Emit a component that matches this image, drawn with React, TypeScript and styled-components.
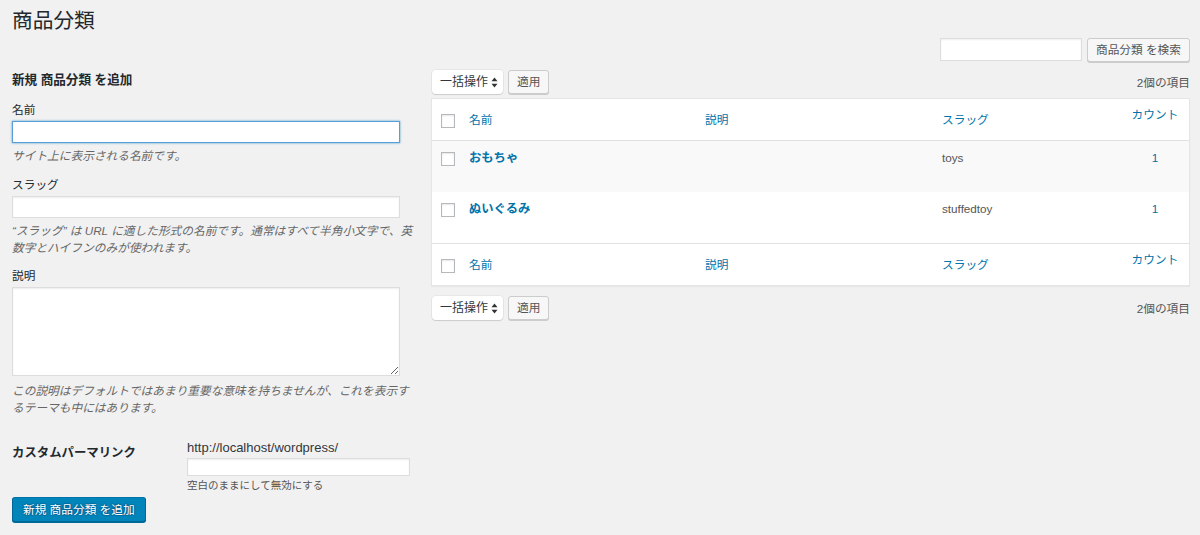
import React from "react";
import styled, { createGlobalStyle } from "styled-components";

type RowKind = "head" | "body" | "foot";
type Term = { id: number; name: string; slug: string; count: number };

const terms: Term[] = [
  { id: 1, name: "おもちゃ", slug: "toys", count: 1 },
  { id: 2, name: "ぬいぐるみ", slug: "stuffedtoy", count: 1 },
];

const GlobalStyle = createGlobalStyle`
  html, body {
    margin: 0;
    padding: 0;
    background: #f1f1f1;
  }
  body {
    font-family: "Liberation Sans", "Noto Sans CJK JP", sans-serif;
    font-size: 11.7px;
    line-height: 17px;
    color: #444;
  }
  * {
    box-sizing: border-box;
  }
`;

const Page = styled.div`
  width: 1200px;
  height: 535px;
  padding: 0 10px 0 12px;
  overflow: hidden;
`;

const Title = styled.h1`
  margin: 0;
  padding-top: 6px;
  font-size: 20.7px;
  line-height: 29px;
  font-weight: 400;
  color: #23282d;
`;

const SearchBox = styled.div`
  display: flex;
  justify-content: flex-end;
  align-items: flex-start;
  gap: 5px;
  margin-top: 3px;
  height: 24px;
`;

const Columns = styled.div`
  display: flex;
  gap: 13px;
`;

const LeftCol = styled.div`
  width: 406px;
  flex: none;
`;

const RightCol = styled.div`
  flex: 1;
`;

const SectionTitle = styled.h2`
  margin: 8px 0 0;
  font-size: 12.6px;
  line-height: 20px;
  font-weight: 700;
  color: #23282d;
`;

const Field = styled.div<{ $gap: number }>`
  margin-top: ${(p) => p.$gap}px;
`;

const FieldLabel = styled.label`
  display: block;
  margin-bottom: 3px;
  color: #23282d;
`;

const TextInput = styled.input<{ $width: number; $height: number; $focused?: boolean }>`
  display: block;
  width: ${(p) => p.$width}px;
  height: ${(p) => p.$height}px;
  margin: 0;
  padding: 2px 6px;
  background: #fff;
  border: 1px solid ${(p) => (p.$focused ? "#5b9dd9" : "#ddd")};
  box-shadow: ${(p) =>
    p.$focused ? "0 0 2px rgba(30, 140, 190, 0.8)" : "inset 0 1px 2px rgba(0, 0, 0, 0.07)"};
  font: inherit;
  color: #32373c;
  outline: none;
`;

const TextArea = styled.textarea`
  display: block;
  width: 388px;
  height: 89px;
  margin: 0 0 6px;
  padding: 2px 6px;
  background: #fff;
  border: 1px solid #ddd;
  box-shadow: inset 0 1px 2px rgba(0, 0, 0, 0.07);
  font: inherit;
  resize: vertical;
  outline: none;
`;

const Description = styled.p`
  margin: 4px 0 0;
  font-style: italic;
  color: #666;
`;

const PermalinkRow = styled.div`
  display: flex;
  margin-top: 23px;
`;

const PermalinkLabel = styled.div`
  width: 175px;
  flex: none;
  padding-top: 6px;
  font-size: 12.4px;
  font-weight: 700;
  color: #23282d;
`;

const PermalinkBody = styled.div`
  display: flex;
  flex-direction: column;
  gap: 2px;
`;

const BaseUrl = styled.span`
  font-size: 13px;
  color: #32373c;
`;

const Hint = styled.span`
  margin-top: -1px;
  font-size: 10.5px;
  line-height: 16px;
  color: #555;
`;

const Button = styled.button<{ $primary?: boolean }>`
  height: ${(p) => (p.$primary ? 25 : 24)}px;
  margin: 0;
  padding: 0 ${(p) => (p.$primary ? 10 : 8)}px;
  border-radius: 3px;
  border-width: 1px;
  border-style: solid;
  border-color: ${(p) => (p.$primary ? "#0073aa #006799 #006799" : "#ccc")};
  background: ${(p) => (p.$primary ? "#0085ba" : "#f7f7f7")};
  box-shadow: 0 1px 0 ${(p) => (p.$primary ? "#006799" : "#ccc")};
  color: ${(p) => (p.$primary ? "#fff" : "#555")};
  text-shadow: ${(p) =>
    p.$primary
      ? "0 -1px 1px #006799, 1px 0 1px #006799, 0 1px 1px #006799, -1px 0 1px #006799"
      : "none"};
  font-family: inherit;
  font-size: 11.7px;
  line-height: 1;
  white-space: nowrap;
  cursor: pointer;
`;

const SubmitRow = styled.div`
  margin-top: 4px;
`;

const Toolbar = styled.div<{ $gap: number }>`
  display: flex;
  align-items: center;
  height: 24px;
  margin-top: ${(p) => p.$gap}px;
`;

const BulkSelect = styled.div`
  display: flex;
  align-items: center;
  justify-content: space-between;
  width: 71px;
  height: 24px;
  margin-left: 1px;
  padding: 0 5px 0 8px;
  background: #fff;
  border-radius: 4px;
  box-shadow: 0 0 0 1px rgba(0, 0, 0, 0.04), 0 1px 1px rgba(0, 0, 0, 0.12);
  font-size: 12px;
  color: #32373c;
`;

const ApplySlot = styled.div`
  margin-left: 5px;
`;

const ItemCount = styled.span`
  margin-left: auto;
  color: #555;
`;

const Table = styled.div`
  margin-top: 4px;
  background: #fff;
  border: 1px solid #e5e5e5;
  box-shadow: 0 1px 1px rgba(0, 0, 0, 0.04);
`;

const Row = styled.div<{ $kind: RowKind; $stripe?: boolean }>`
  display: grid;
  grid-template-columns: 37px 236px 237px 179px 1fr;
  height: ${(p) => (p.$kind === "body" ? 51 : 42)}px;
  background: ${(p) => (p.$stripe ? "#f9f9f9" : "#fff")};
  border-bottom: ${(p) => (p.$kind === "head" ? "1px solid #e1e1e1" : "none")};
  border-top: ${(p) => (p.$kind === "foot" ? "1px solid #e1e1e1" : "none")};
`;

const CheckCell = styled.div<{ $kind: RowKind }>`
  padding: ${(p) => (p.$kind === "body" ? 11 : 15)}px 0 0 9px;
`;

const Cell = styled.div<{ $kind: RowKind }>`
  padding-top: ${(p) => (p.$kind === "body" ? 8 : 12)}px;
`;

const CountCell = styled.div<{ $kind: RowKind }>`
  padding-top: ${(p) => (p.$kind === "body" ? 8 : 7)}px;
  text-align: center;
`;

const Checkbox = styled.input.attrs({ type: "checkbox" })`
  appearance: none;
  display: block;
  width: 14px;
  height: 14px;
  margin: 0;
  background: #fff;
  border: 1px solid #b4b9be;
  box-shadow: inset 0 1px 2px rgba(0, 0, 0, 0.1);
`;

const HeadLink = styled.a`
  color: #0073aa;
  text-decoration: none;
`;

const TermName = styled.a`
  font-size: 12.3px;
  font-weight: 700;
  color: #0073aa;
  text-decoration: none;
`;

const SlugText = styled.span`
  color: #555;
`;

const SortArrows = () => (
  <svg width="7" height="11" viewBox="0 0 7 11">
    <path d="M3.5 0.5 L6.5 4.3 L0.5 4.3 Z" fill="#333" />
    <path d="M3.5 10.5 L6.5 6.7 L0.5 6.7 Z" fill="#333" />
  </svg>
);

const BulkBar: React.FC<{ gap: number }> = ({ gap }) => (
  <Toolbar $gap={gap}>
    <BulkSelect>
      一括操作
      <SortArrows />
    </BulkSelect>
    <ApplySlot>
      <Button>適用</Button>
    </ApplySlot>
    <ItemCount>2個の項目</ItemCount>
  </Toolbar>
);

const HeaderRow: React.FC<{ kind: RowKind }> = ({ kind }) => (
  <Row $kind={kind}>
    <CheckCell $kind={kind}>
      <Checkbox />
    </CheckCell>
    <Cell $kind={kind}>
      <HeadLink>名前</HeadLink>
    </Cell>
    <Cell $kind={kind}>
      <HeadLink>説明</HeadLink>
    </Cell>
    <Cell $kind={kind}>
      <HeadLink>スラッグ</HeadLink>
    </Cell>
    <CountCell $kind={kind}>
      <HeadLink>カウント</HeadLink>
    </CountCell>
  </Row>
);

const TermRow: React.FC<{ term: Term; stripe: boolean }> = ({ term, stripe }) => (
  <Row $kind="body" $stripe={stripe}>
    <CheckCell $kind="body">
      <Checkbox />
    </CheckCell>
    <Cell $kind="body">
      <TermName>{term.name}</TermName>
    </Cell>
    <Cell $kind="body" />
    <Cell $kind="body">
      <SlugText>{term.slug}</SlugText>
    </Cell>
    <CountCell $kind="body">
      <HeadLink>{term.count}</HeadLink>
    </CountCell>
  </Row>
);

const App: React.FC = () => (
  <Page>
    <GlobalStyle />
    <Title>商品分類</Title>
    <SearchBox>
      <TextInput $width={142} $height={23} />
      <Button>商品分類 を検索</Button>
    </SearchBox>
    <Columns>
      <LeftCol>
        <SectionTitle>新規 商品分類 を追加</SectionTitle>
        <Field $gap={11}>
          <FieldLabel>名前</FieldLabel>
          <TextInput $width={388} $height={22} $focused />
          <Description>サイト上に表示される名前です。</Description>
        </Field>
        <Field $gap={12}>
          <FieldLabel>スラッグ</FieldLabel>
          <TextInput $width={388} $height={22} />
          <Description>
            “スラッグ” は URL に適した形式の名前です。通常はすべて半角小文字で、英数字とハイフンのみが使われます。
          </Description>
        </Field>
        <Field $gap={11}>
          <FieldLabel>説明</FieldLabel>
          <TextArea />
          <Description>
            この説明はデフォルトではあまり重要な意味を持ちませんが、これを表示するテーマも中にはあります。
          </Description>
        </Field>
        <PermalinkRow>
          <PermalinkLabel>カスタムパーマリンク</PermalinkLabel>
          <PermalinkBody>
            <BaseUrl>http://localhost/wordpress/</BaseUrl>
            <TextInput $width={223} $height={18} />
            <Hint>空白のままにして無効にする</Hint>
          </PermalinkBody>
        </PermalinkRow>
        <SubmitRow>
          <Button $primary>新規 商品分類 を追加</Button>
        </SubmitRow>
      </LeftCol>
      <RightCol>
        <BulkBar gap={8} />
        <Table>
          <HeaderRow kind="head" />
          {terms.map((t, i) => (
            <TermRow key={t.id} term={t} stripe={i % 2 === 0} />
          ))}
          <HeaderRow kind="foot" />
        </Table>
        <BulkBar gap={10} />
      </RightCol>
    </Columns>
  </Page>
);

export default App;
